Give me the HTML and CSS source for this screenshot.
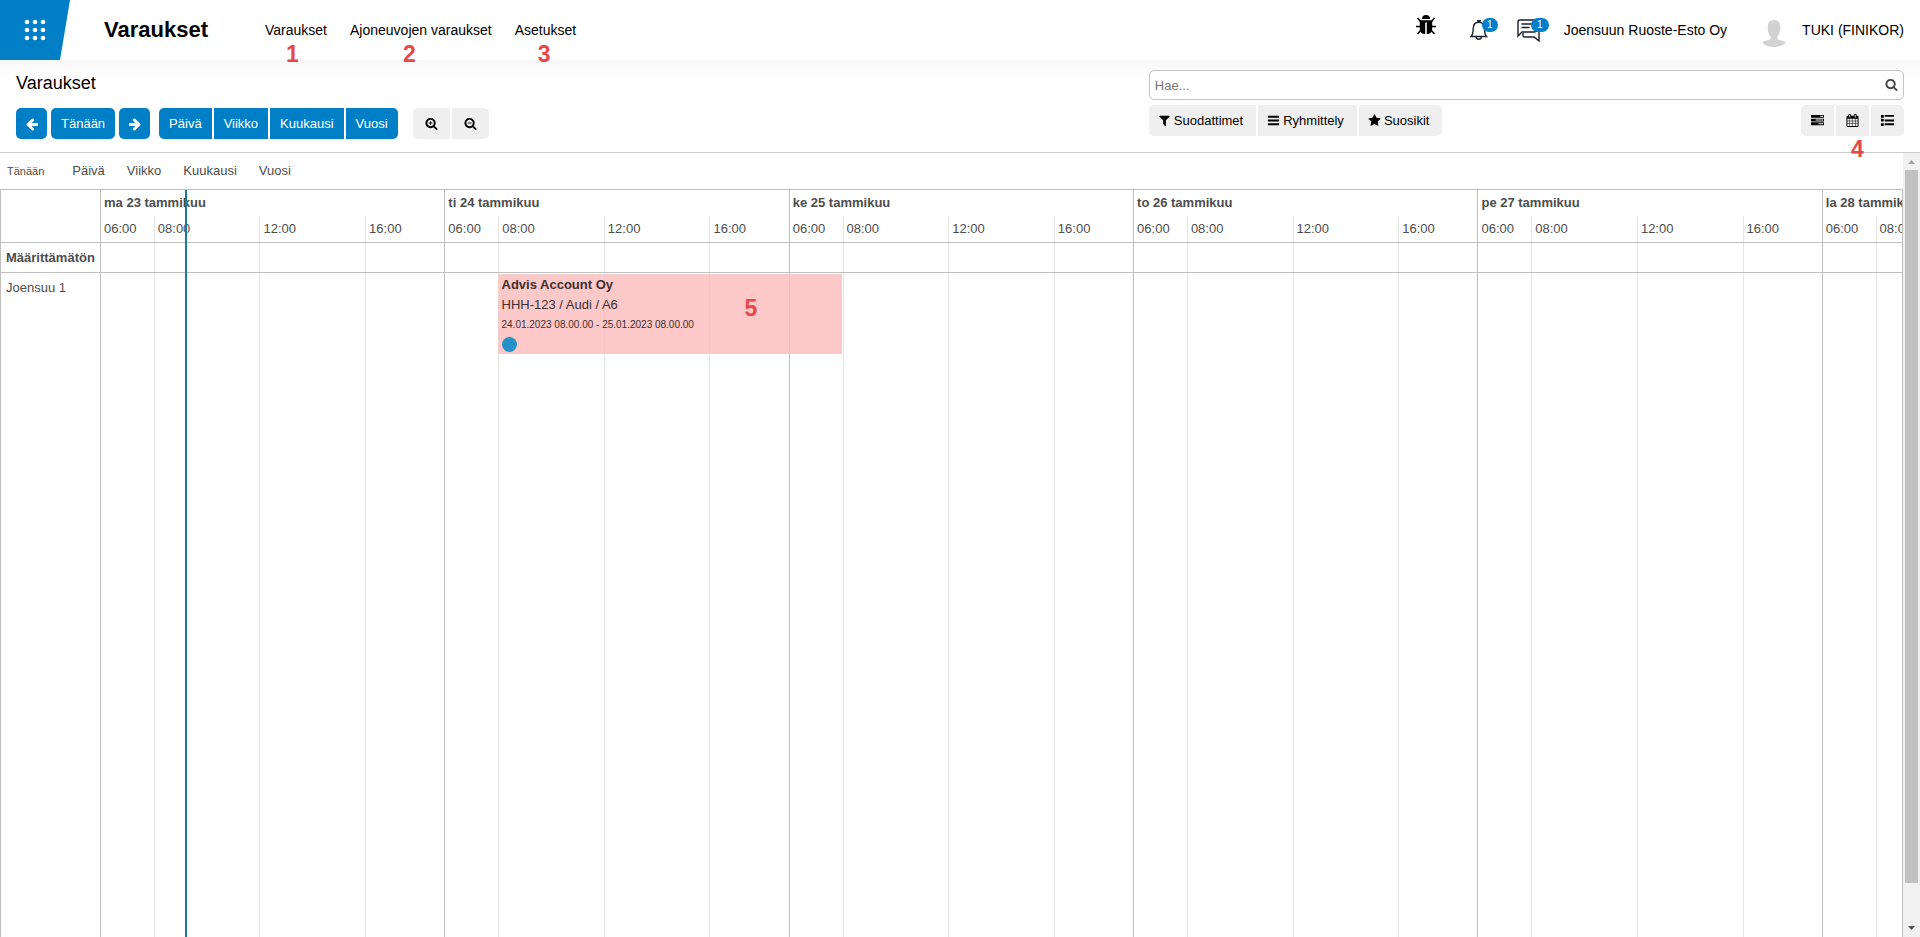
FILE: index.html
```html
<!DOCTYPE html>
<html lang="fi">
<head>
<meta charset="utf-8">
<title>Varaukset</title>
<link rel="stylesheet" href="styles.css">
</head>
<body>
<svg class="symbols" aria-hidden="true">
  <symbol id="arrow" viewBox="0 0 1792 1792"><path d="M1664 896v128q0 53-32.500 90.500t-84.500 37.500h-704l293 294q38 36 38 90t-38 90l-75 76q-37 37-90 37-52 0-91-37l-651-652q-37-37-37-90 0-52 37-91l651-650q38-38 91-38 52 0 90 38l75 74q38 38 38 91t-38 91l-293 293h704q52 0 84.500 37.500t32.500 90.500z"/></symbol>
  <symbol id="search" viewBox="0 0 1792 1792"><path d="M1216 832q0-185-131.500-316.500t-316.500-131.500-316.500 131.500-131.500 316.500 131.500 316.500 316.500 131.500 316.500-131.500 131.500-316.500zm512 832q0 52-38 90t-90 38q-54 0-90-38l-343-342q-179 124-399 124-143 0-273.500-55.500t-225-150-150-225-55.500-273.500 55.500-273.500 150-225 225-150 273.500-55.500 273.500 55.500 225 150 150 225 55.500 273.500q0 220-124 399l343 343q37 37 37 90z"/></symbol>
  <symbol id="filter" viewBox="0 0 1792 1792"><path d="M1595 295q17 41-14 70l-493 493v742q0 42-39 59-13 5-25 5-27 0-45-19l-256-256q-19-19-19-45v-486l-493-493q-31-29-14-70 17-39 59-39h1280q42 0 59 39z"/></symbol>
  <symbol id="bars" viewBox="0 0 14 14"><path d="M1 2h12v2H1zM1 6h12v2H1zM1 10h12v2H1z"/></symbol>
  <symbol id="star" viewBox="0 0 1792 1792"><path d="M1728 647q0 22-26 48l-363 354 86 500q1 7 1 20 0 21-10.500 35.500t-30.500 14.500q-19 0-40-12l-449-236-449 236q-22 12-40 12-21 0-31.500-14.500t-10.500-35.500q0-6 2-20l86-500-364-354q-25-27-25-48 0-37 56-46l502-73 225-455q19-41 49-41t49 41l225 455 502 73q56 9 56 46z"/></symbol>
  <symbol id="tasks" viewBox="0 0 1792 1792"><path d="M1024 1408h640v-128h-640v128zm-384-512h1024v-128h-1024v128zm640-512h384v-128h-384v128zm512 832v256q0 26-19 45t-45 19h-1664q-26 0-45-19t-19-45v-256q0-26 19-45t45-19h1664q26 0 45 19t19 45zm0-512v256q0 26-19 45t-45 19h-1664q-26 0-45-19t-19-45v-256q0-26 19-45t45-19h1664q26 0 45 19t19 45zm0-512v256q0 26-19 45t-45 19h-1664q-26 0-45-19t-19-45v-256q0-26 19-45t45-19h1664q26 0 45 19t19 45z"/></symbol>
  <symbol id="calendar" viewBox="0 0 1792 1792"><path d="M192 1664h288v-288h-288v288zm352 0h320v-288h-320v288zm-352-352h288v-320h-288v320zm352 0h320v-320h-320v320zm-352-384h288v-288h-288v288zm736 736h320v-288h-320v288zm-384-736h320v-288h-320v288zm768 736h288v-288h-288v288zm-384-352h320v-320h-320v320zm-352-864v-288q0-13-9.500-22.500t-22.500-9.500h-64q-13 0-22.500 9.500t-9.500 22.500v288q0 13 9.500 22.500t22.500 9.500h64q13 0 22.500-9.500t9.500-22.500zm736 864h288v-320h-288v320zm-384-384h320v-288h-320v288zm384 0h288v-288h-288v288zm32-480v-288q0-13-9.500-22.500t-22.500-9.500h-64q-13 0-22.500 9.500t-9.500 22.500v288q0 13 9.500 22.500t22.500 9.500h64q13 0 22.500-9.500t9.500-22.500zm384-64v1280q0 52-38 90t-90 38h-1408q-52 0-90-38t-38-90v-1280q0-52 38-90t90-38h128v-96q0-66 47-113t113-47h64q66 0 113 47t47 113v96h384v-96q0-66 47-113t113-47h64q66 0 113 47t47 113v96h128q52 0 90 38t38 90z"/></symbol>
  <symbol id="list" viewBox="0 0 14 14"><path d="M0 1h3v3H0zM4 1h10v2H4zM0 5h3v3H0zM4 6h10v2H4zM0 10h3v3H0zM4 10h10v2H4z"/></symbol>
</svg>

<header class="topbar">
  <button class="apps" aria-label="Sovellukset">
    <svg width="22" height="22" viewBox="0 0 22 22"><g fill="#fff"><circle cx="3" cy="3" r="2.300"/><circle cx="11" cy="3" r="2.300"/><circle cx="19" cy="3" r="2.300"/><circle cx="3" cy="11" r="2.300"/><circle cx="11" cy="11" r="2.300"/><circle cx="19" cy="11" r="2.300"/><circle cx="3" cy="19" r="2.300"/><circle cx="11" cy="19" r="2.300"/><circle cx="19" cy="19" r="2.300"/></g></svg>
  </button>
  <h1 class="brand">Varaukset</h1>
  <nav class="menu">
    <div class="menu-item"><a href="#">Varaukset</a><span class="mark mark-one">1</span></div>
    <div class="menu-item"><a href="#">Ajoneuvojen varaukset</a><span class="mark mark-two">2</span></div>
    <div class="menu-item"><a href="#">Asetukset</a><span class="mark mark-three">3</span></div>
  </nav>
  <div class="systray">
    <button class="tray bug" aria-label="Kehittäjätyökalut">
      <svg width="20" height="20" viewBox="0 0 20 20"><path d="M6 4a4 4 0 0 1 8 0z"/><path d="M3.800 5.200h12.400v8.300q0 5.500-5.400 5.500V7.500H9.200V19q-5.400 0-5.400-5.500z"/><path d="M4.500 6.500 1.500 3M15.500 6.500 18.500 3M4.500 11.500H0M15.500 11.500H20M5 15l-3.500 4M15 15l3.500 4" fill="none" stroke="#000" stroke-width="1.500"/></svg>
    </button>
    <button class="tray bell" aria-label="Toiminnot">
      <svg width="18" height="22" viewBox="0 0 18 22" fill="none" stroke="#1c1f2b" stroke-width="1.400"><path d="M7 1.700h4M1 17.500h15.500c-2-2-2-3.500-2-8 0-4-2.200-6.300-5.700-6.300S3.200 5.500 3.200 9.500c0 4.500-.2 6-2.200 8zM6.200 18c.3 3 4.900 3 5.300 0"/></svg>
      <span class="badge">1</span>
    </button>
    <button class="tray chat" aria-label="Keskustelut">
      <svg width="23" height="23" viewBox="0 0 23 23" fill="none" stroke="#1c1f2b" stroke-width="1.400"><path d="M20 9V3q0-2-2-2H3Q1 1 1 3v14l4-4h12q3 0 3-3M4.500 5h11M4.500 8.500h8M6 14v2.500q0 1.500 1.500 1.500H17l5 4V11"/></svg>
      <span class="badge">1</span>
    </button>
    <button class="company">Joensuun Ruoste-Esto Oy</button>
    <button class="user">
      <svg width="24" height="28" viewBox="0 0 24 28" fill="#d2d2d2"><path d="M12 1c4.500 0 6.500 3 6.300 8-.2 4-1.300 7-2.800 8.500-.4 2 .1 3 2 3.400 3 .6 5 1.300 6.500 2.600C21 26.500 16.500 28 12 28S3 26.500 0 23.500c1.500-1.300 3.500-2 6.500-2.600 1.900-.4 2.400-1.400 2-3.400C7 16 5.900 13 5.700 9 5.500 4 7.500 1 12 1z"/></svg>
      TUKI (FINIKOR)
    </button>
  </div>
</header>

<section class="control">
  <div class="control-left">
    <h2 class="crumb">Varaukset</h2>
    <div class="actions">
      <button class="btn primary square" aria-label="Edellinen"><svg class="icon"><use href="#arrow"/></svg></button>
      <button class="btn primary">Tänään</button>
      <button class="btn primary square" aria-label="Seuraava"><svg class="icon flip"><use href="#arrow"/></svg></button>
      <div class="group scales">
        <button class="btn primary">Päivä</button>
        <button class="btn primary">Viikko</button>
        <button class="btn primary">Kuukausi</button>
        <button class="btn primary">Vuosi</button>
      </div>
      <div class="group zooms">
        <button class="btn light" aria-label="Lähennä"><svg class="icon small" viewBox="0 0 14 14"><use href="#search" width="14" height="14"/><path d="M4 6.500h4M6 4.500v4" stroke="#000"/></svg></button>
        <button class="btn light" aria-label="Loitonna"><svg class="icon small" viewBox="0 0 14 14"><use href="#search" width="14" height="14"/><path d="M4 6.500h4" stroke="#000"/></svg></button>
      </div>
    </div>
  </div>
  <div class="control-right">
    <div class="search">
      <input type="text" placeholder="Hae..." aria-label="Hae">
      <button class="search-go" aria-label="Etsi"><svg class="icon small"><use href="#search"/></svg></button>
    </div>
    <div class="options">
      <div class="group">
        <button class="btn light option"><svg class="icon small"><use href="#filter"/></svg>Suodattimet</button>
        <button class="btn light option"><svg class="icon small"><use href="#bars"/></svg>Ryhmittely</button>
        <button class="btn light option"><svg class="icon small"><use href="#star"/></svg>Suosikit</button>
      </div>
      <div class="group views">
        <button class="btn light view" aria-label="Aikajana"><svg class="icon small"><use href="#tasks"/></svg></button>
        <button class="btn light view" aria-label="Kalenteri"><svg class="icon small"><use href="#calendar"/></svg></button>
        <button class="btn light view" aria-label="Luettelo"><svg class="icon small"><use href="#list"/></svg></button>
        <span class="mark mark-four">4</span>
      </div>
    </div>
  </div>
</section>

<main class="content">
  <div class="pane">
    <div class="ranges">
      <button class="range today">Tänään</button>
      <button class="range">Päivä</button>
      <button class="range">Viikko</button>
      <button class="range">Kuukausi</button>
      <button class="range">Vuosi</button>
    </div>
    <div class="timeline">
      <div class="labels">
        <div class="label-head"></div>
        <div class="label strong">Määrittämätön</div>
        <div class="label">Joensuu 1</div>
      </div>
      <div class="track">
        <div class="day"><div class="date">ma 23 tammikuu</div><div class="hours"><span>06:00</span><span>08:00</span><span>12:00</span><span>16:00</span></div></div>
        <div class="day"><div class="date">ti 24 tammikuu</div><div class="hours"><span>06:00</span><span>08:00</span><span>12:00</span><span>16:00</span></div></div>
        <div class="day"><div class="date">ke 25 tammikuu</div><div class="hours"><span>06:00</span><span>08:00</span><span>12:00</span><span>16:00</span></div></div>
        <div class="day"><div class="date">to 26 tammikuu</div><div class="hours"><span>06:00</span><span>08:00</span><span>12:00</span><span>16:00</span></div></div>
        <div class="day"><div class="date">pe 27 tammikuu</div><div class="hours"><span>06:00</span><span>08:00</span><span>12:00</span><span>16:00</span></div></div>
        <div class="day partial"><div class="date">la 28 tammikuu</div><div class="hours"><span>06:00</span><span>08:00</span></div></div>
        <div class="rule rule-head"></div>
        <div class="rule rule-row"></div>
        <article class="event">
          <strong>Advis Account Oy</strong>
          <span>HHH-123 / Audi / A6</span>
          <small>24.01.2023 08.00.00 - 25.01.2023 08.00.00</small>
          <i class="dot"></i>
          <span class="mark mark-five">5</span>
        </article>
        <div class="now"></div>
      </div>
    </div>
  </div>
  <div class="scrollbar">
    <svg class="scroll-arrow" viewBox="0 0 17 17"><path d="M5 11h7L8.500 7z" fill="#a3a3a3"/></svg>
    <div class="scroll-space"><div class="thumb"></div></div>
    <svg class="scroll-arrow" viewBox="0 0 17 17"><path d="M5 6h7l-3.500 4z" fill="#505050"/></svg>
  </div>
</main>
</body>
</html>
```

FILE: styles.css
```css
* { box-sizing: border-box; }

body {
  margin: 0;
  height: 100vh;
  display: flex;
  flex-direction: column;
  overflow: hidden;
  background: #fff;
  color: #000;
  font: 13px/20px "Liberation Sans", Arial, sans-serif;
}

button {
  margin: 0;
  padding: 0;
  border: 0;
  background: none;
  color: inherit;
  font: inherit;
}

h1, h2 { margin: 0; }

.symbols { position: absolute; width: 0; height: 0; }

.icon { display: block; width: 14px; height: 14px; fill: currentColor; }
.icon.small { width: 13px; height: 13px; }
.icon.flip { transform: scaleX(-1); }

.mark {
  position: absolute;
  z-index: 3;
  color: #e5484b;
  font-size: 23px;
  font-weight: bold;
  line-height: 24px;
}

/* Top bar */
.topbar {
  display: flex;
  align-items: center;
  flex: none;
  height: 60px;
  padding-right: 16px;
  font-size: 14px;
}

.apps {
  display: flex;
  align-items: center;
  justify-content: center;
  width: 70px;
  height: 60px;
  background: #017fc6;
  clip-path: polygon(0 0, 100% 0, 60px 100%, 0 100%);
}

.brand { width: 161px; margin-left: 34px; font-size: 22px; line-height: 28px; }

.menu { display: flex; gap: 23px; }
.menu-item { position: relative; }
.menu a { color: inherit; text-decoration: none; }
.mark-one { left: 21px; top: 22px; }
.mark-two { left: 53px; top: 22px; }
.mark-three { left: 23px; top: 22px; }

.systray { display: flex; align-items: center; margin-left: auto; }
.tray { position: relative; display: flex; }
.bug { margin: 0 34px 10px 0; }
.bell { margin-right: 29px; }
.chat { margin-right: 24px; }
.badge {
  position: absolute;
  top: -1px;
  left: 12px;
  width: 16px;
  height: 14px;
  border-radius: 7px;
  background: #017fc6;
  color: #fff;
  font-size: 10px;
  line-height: 13px;
}
.chat .badge { left: 14px; width: 18px; }
.user { display: flex; align-items: center; gap: 16px; margin-left: 35px; }
.user svg { margin-top: 6px; }

/* Control panel */
.control {
  display: flex;
  flex: none;
  justify-content: space-between;
  height: 93px;
  padding: 10px 16px 0;
  border-bottom: 1px solid #ccc;
  background: linear-gradient(#f8f8f8, #fff 22px);
}

.crumb { font-size: 18px; font-weight: normal; line-height: 26px; }

.actions { display: flex; gap: 4px; margin-top: 12px; }
.group { position: relative; display: flex; gap: 2px; }
.btn {
  display: flex;
  align-items: center;
  justify-content: center;
  height: 31px;
  padding: 0 10px;
  border-radius: 5px;
}
.primary { background: #017fc6; color: #fff; }
.light { background: #efefef; }
.square { width: 31px; padding: 0; }
.group .btn { border-radius: 0; }
.group .btn:first-child { border-radius: 5px 0 0 5px; }
.group .btn:nth-last-of-type(1) { border-radius: 0 5px 5px 0; }
.scales { margin-left: 5px; }
.zooms { margin-left: 11px; }
.zooms .btn { width: 37px; }

.control-right { width: 40%; }
.search {
  display: flex;
  align-items: center;
  height: 30px;
  border: 1px solid #c4c4c4;
  border-radius: 5px;
  background: #fff;
}
.search input {
  flex: 1;
  min-width: 0;
  padding: 2px 5px 0;
  border: 0;
  outline: 0;
  background: none;
  font: inherit;
}
.search input::placeholder { color: #757575; }
.search-go { padding: 0 5px 2px 0; color: #444; }

.options { display: flex; justify-content: space-between; margin-top: 5px; }
.option { gap: 3px; padding: 0 13px 0 9px; }
.view { width: 33px; padding: 0; }
.mark-four { left: 50px; top: 32px; }

/* Calendar */
.content { display: flex; flex: 1; min-height: 0; color: #4d4d4d; }
.pane { display: flex; flex: 1; flex-direction: column; min-width: 0; }

.ranges { display: flex; flex: none; align-items: center; gap: 22px; height: 36px; padding: 0 7px; }
.today { margin-right: 6px; font-size: 11px; }

.timeline {
  display: flex;
  flex: 1;
  min-height: 0;
  border: solid #bfbfbf;
  border-width: 1px 1px 0;
}

.labels { flex: none; width: 99px; }
.label-head { height: 53px; border-bottom: 1px solid #bfbfbf; }
.label { height: 30px; padding: 5px 5px 0; }
.strong { border-bottom: 1px solid #bfbfbf; font-weight: bold; }

.track { position: relative; display: flex; flex: 1; min-width: 0; overflow: hidden; }
.day {
  display: grid;
  flex: 13 1 0;
  grid-template-rows: 26px 1fr;
  min-width: 0;
  border-left: 1px solid #bfbfbf;
}
.partial { flex-grow: 3; }
.date { min-width: 0; padding: 3px 3px 0; font-weight: bold; white-space: nowrap; }
.hours {
  display: grid;
  grid-template-columns: minmax(0, 2fr) minmax(0, 4fr) minmax(0, 4fr) minmax(0, 3fr);
  min-width: 0;
}
.partial .hours { grid-template-columns: minmax(0, 2fr) minmax(0, 1fr); }
.hours span { padding: 3px 0 0 3px; border-left: 1px solid #e5e5e5; }
.hours span:first-child { border-left: 0; }

.rule { position: absolute; left: 0; right: 0; height: 1px; background: #bfbfbf; }
.rule-head { top: 52px; }
.rule-row { top: 82px; }

/* Positions follow the 68 visible hours of the track. */
.event {
  position: absolute;
  top: 84px;
  left: calc(100% * 15 / 68);
  width: calc(100% * 13 / 68);
  height: 80px;
  padding-left: 3px;
  border: 1px solid #f3cccc;
  background: rgba(252, 190, 190, 0.85);
  color: #402f2f;
}
.event strong, .event > span:not(.mark), .event small { display: block; height: 20px; white-space: nowrap; }
.event small { font-size: 10px; }
.dot { display: block; width: 15px; height: 15px; margin-top: 2px; border-radius: 50%; background: #2690c8; }
.mark-five { left: 246px; top: 21px; }

.now { position: absolute; top: 0; bottom: 0; left: calc(100% * 32 / 680); width: 2px; background: #1a7ba0; }

.scrollbar { display: flex; flex: none; flex-direction: column; width: 17px; background: #f1f1f1; }
.scroll-arrow { width: 17px; height: 17px; }
.scroll-space { flex: 1; padding: 0 2px; }
.thumb { height: 95%; background: #c1c1c1; }
```
